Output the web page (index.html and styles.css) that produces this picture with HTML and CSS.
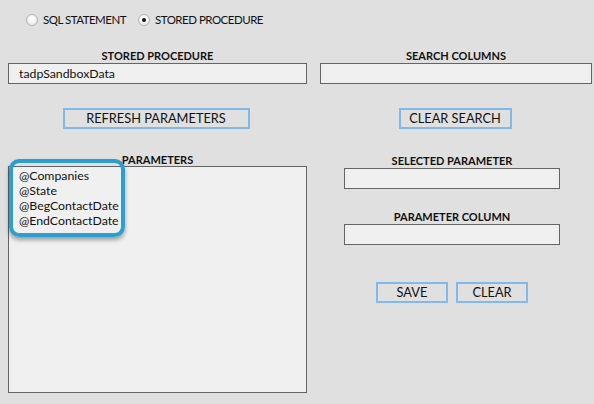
FILE: index.html
```html
<!DOCTYPE html>
<html>
<head>
<meta charset="utf-8">
<link rel="stylesheet" href="styles.css">
</head>
<body>
<div class="page">
  <div class="mode-row">
    <label class="radio"><span class="radio-dot"></span><span class="radio-text">SQL STATEMENT</span></label>
    <label class="radio"><span class="radio-dot checked"></span><span class="radio-text">STORED PROCEDURE</span></label>
  </div>
  <div class="columns">
    <div class="col col-left">
      <div class="field-label lbl-top">STORED PROCEDURE</div>
      <div class="textbox">tadpSandboxData</div>
      <div class="btn-row btn-row-top"><button class="btn btn-refresh">REFRESH PARAMETERS</button></div>
      <div class="field-label lbl-params">PARAMETERS</div>
      <div class="listbox">
        <div class="list-item">@Companies</div>
        <div class="list-item">@State</div>
        <div class="list-item">@BegContactDate</div>
        <div class="list-item">@EndContactDate</div>
        <div class="highlight"></div>
      </div>
    </div>
    <div class="col col-right">
      <div class="field-label lbl-top">SEARCH COLUMNS</div>
      <div class="textbox"></div>
      <div class="btn-row btn-row-top"><button class="btn btn-clear-search">CLEAR SEARCH</button></div>
      <div class="sub">
        <div class="field-label lbl-sel">SELECTED PARAMETER</div>
        <div class="textbox"></div>
        <div class="field-label lbl-col">PARAMETER COLUMN</div>
        <div class="textbox"></div>
        <div class="btn-row btn-row-save">
          <button class="btn btn-small">SAVE</button>
          <button class="btn btn-small">CLEAR</button>
        </div>
      </div>
    </div>
  </div>
</div>
</body>
</html>
```
FILE: styles.css
```css
html, body {
  margin: 0;
  padding: 0;
  background: #e0e0e0;
}
body {
  width: 594px;
  height: 404px;
  overflow: hidden;
  font-family: "Lato", "Open Sans", sans-serif;
  font-size: 12px;
  color: #111;
}
.page {
  padding: 0 2px 0 8px;
}
.mode-row {
  display: flex;
  align-items: center;
  gap: 12px;
  padding: 13px 0 0 18px;
  height: 13px;
}
.radio {
  display: flex;
  align-items: center;
  gap: 5px;
}
.radio-dot {
  width: 10px;
  height: 10px;
  border-radius: 50%;
  border: 1px solid #b5b5b5;
  background: radial-gradient(circle at 50% 40%, #ffffff 0%, #f2f2f2 55%, #d4d4d4 100%);
  position: relative;
  box-sizing: content-box;
}
.radio-dot.checked::after {
  content: "";
  position: absolute;
  left: 3px;
  top: 3px;
  width: 4px;
  height: 4px;
  border-radius: 50%;
  background: #111;
}
.radio-text {
  font-size: 11.5px;
  letter-spacing: -0.5px;
  line-height: 13px;
}
.columns {
  display: flex;
  gap: 13px;
  margin-top: 23px;
}
.col {
  display: flex;
  flex-direction: column;
}
.col-left {
  width: 299px;
}
.col-right {
  width: 272px;
}
.field-label {
  font-weight: bold;
  font-size: 11px;
  text-align: center;
  line-height: 14px;
  height: 14px;
}
.textbox {
  box-sizing: border-box;
  height: 21px;
  border: 1px solid #646464;
  background: #f0f0f0;
  padding: 0 10px;
  font-size: 12.3px;
  line-height: 19px;
}
.btn-row {
  display: flex;
  justify-content: center;
}
.btn-row-top {
  margin-top: 24px;
}
.btn {
  box-sizing: border-box;
  height: 21px;
  border: 2px solid #82b8ea;
  background: #e0e0e0;
  font-family: inherit;
  font-size: 12.8px;
  color: #111;
  padding: 0;
  line-height: 17px;
}
.btn-refresh {
  width: 187px;
  margin-left: -3px;
}
.btn-clear-search {
  width: 113px;
  margin-left: -2px;
}
.lbl-params {
  margin-top: 24px;
}
.listbox {
  position: relative;
  box-sizing: border-box;
  height: 227px;
  border: 1px solid #646464;
  background: #f0f0f0;
  padding: 1px 10px;
  margin-top: -1px;
  font-size: 12.3px;
}
.list-item {
  line-height: 15px;
}
.highlight {
  position: absolute;
  left: 0;
  top: -8px;
  width: 116px;
  height: 78px;
  box-sizing: border-box;
  border: 4px solid #2a9fd0;
  border-radius: 10px;
  box-shadow: 0 3px 4px rgba(0, 0, 0, 0.35);
}
.sub {
  width: 216px;
  margin: 25px 0 0 24px;
  display: flex;
  flex-direction: column;
}
.lbl-col {
  margin-top: 21px;
}
.btn-row-save {
  gap: 8px;
  margin-top: 37px;
}
.btn-small {
  width: 72px;
}
```
